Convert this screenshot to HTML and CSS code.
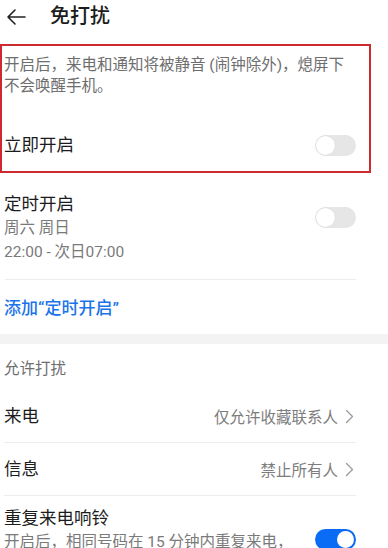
FILE: index.html
```html
<!DOCTYPE html>
<html lang="zh-CN">
<head>
<meta charset="utf-8">
<title>免打扰</title>
<link rel="stylesheet" href="styles.css">
</head>
<body>
<div class="page">
  <header class="header">
    <svg class="back" width="20" height="18" viewBox="0 0 20 18" aria-hidden="true">
      <path d="M19 9H2M9 2L2 9l7 7" fill="none" stroke="#222" stroke-width="1.6" stroke-linecap="round" stroke-linejoin="round"/>
    </svg>
    <h1 class="title">免打扰</h1>
  </header>

  <section class="highlight">
    <p class="desc">开启后，来电和通知将被静音 (闹钟除外)，熄屏下不会唤醒手机。</p>
    <div class="row row-now">
      <span class="label">立即开启</span>
      <span class="switch"></span>
    </div>
  </section>

  <section class="schedule">
    <div class="sched-row">
      <div class="sched-text">
        <div class="label">定时开启</div>
        <div class="sub">周六 周日</div>
        <div class="sub">22:00 - 次日07:00</div>
      </div>
      <span class="switch"></span>
    </div>
    <div class="divider"></div>
    <div class="add">添加“定时开启”</div>
  </section>

  <div class="band"></div>

  <section class="allow">
    <div class="group-title">允许打扰</div>
    <div class="row nav-row">
      <span class="label">来电</span>
      <span class="value">仅允许收藏联系人<svg class="chev" width="9" height="15" viewBox="0 0 9 15" aria-hidden="true"><path d="M1.5 1.5l6 6-6 6" fill="none" stroke="#9a9a9a" stroke-width="1.3" stroke-linecap="round" stroke-linejoin="round"/></svg></span>
    </div>
    <div class="divider"></div>
    <div class="row nav-row">
      <span class="label">信息</span>
      <span class="value">禁止所有人<svg class="chev" width="9" height="15" viewBox="0 0 9 15" aria-hidden="true"><path d="M1.5 1.5l6 6-6 6" fill="none" stroke="#9a9a9a" stroke-width="1.3" stroke-linecap="round" stroke-linejoin="round"/></svg></span>
    </div>
    <div class="divider"></div>
    <div class="repeat-row">
      <div class="repeat-text">
        <div class="label">重复来电响铃</div>
        <div class="sub sub-wide">开启后，相同号码在 15 分钟内重复来电，第二次来电将不被静音。</div>
      </div>
      <span class="switch on"></span>
    </div>
  </section>
</div>
</body>
</html>
```

FILE: styles.css
```css
html, body {
  margin: 0;
  padding: 0;
  background: #fff;
}
body {
  font-family: Roboto, "Noto Sans CJK SC", "Noto Sans", sans-serif;
  color: #1c1c1c;
  overflow: hidden;
  height: 548px;
}
.page {
  width: 388px;
}
.header {
  height: 32px;
  display: flex;
  align-items: center;
  padding-left: 6px;
  margin-bottom: 12px;
}
.back {
  display: block;
  margin-top: 2px;
}
.title {
  margin: 0 0 0 24px;
  font-size: 20px;
  font-weight: 500;
  line-height: 28px;
  color: #1c1c1c;
}
.highlight {
  border: 2px solid #cc2a2e;
  margin-right: 17px;
  padding: 9px 13px 0 2px;
  box-sizing: border-box;
  height: 129px;
}
.desc {
  margin: 0;
  font-size: 15.5px;
  line-height: 21px;
  color: #6e6e6e;
}
.row {
  display: flex;
  align-items: center;
  justify-content: space-between;
}
.row-now {
  height: 50px;
  margin-top: 23px;
}
.label {
  font-size: 17.5px;
  line-height: 24px;
  color: #1c1c1c;
}
.switch {
  position: relative;
  flex: none;
  width: 41px;
  height: 21px;
  border-radius: 11px;
  background: #e6e6e6;
}
.switch::after {
  content: "";
  position: absolute;
  left: 1px;
  top: 1px;
  width: 19px;
  height: 19px;
  border-radius: 50%;
  background: #fff;
  box-shadow: 0 0 0 0.5px #d8d8d8;
}
.switch.on {
  background: #0a6cf5;
}
.switch.on::after {
  left: auto;
  right: 2px;
  top: 2px;
  width: 17px;
  height: 17px;
  box-shadow: none;
}
.schedule {
  padding: 19px 32px 14px 4px;
}
.sched-row {
  display: flex;
  align-items: center;
  justify-content: space-between;
  padding-bottom: 15px;
}
.sub {
  font-size: 15.5px;
  line-height: 24px;
  color: #7a7a7a;
}
.sched-row .switch {
  margin-top: -22px;
}
.divider {
  height: 1px;
  background: #ececec;
}
.schedule .divider {
  margin-left: 1px;
}
.add {
  margin-top: 16px;
  font-size: 17px;
  line-height: 24px;
  font-weight: 500;
  color: #1a73e8;
}
.band {
  height: 10px;
  background: #f3f3f3;
}
.allow {
  padding: 0 32px 0 4px;
}
.group-title {
  height: 46px;
  display: flex;
  align-items: center;
  font-size: 15.5px;
  color: #6e6e6e;
}
.nav-row {
  height: 52px;
}
.value {
  display: flex;
  align-items: center;
  gap: 7px;
  font-size: 15.5px;
  color: #7d7d7d;
}
.chev {
  display: block;
  margin-right: 2px;
}
.repeat-row {
  display: flex;
  align-items: center;
  justify-content: space-between;
  padding-top: 10px;
}
.repeat-text {
  width: 290px;
}
.sub-wide {
  font-size: 15.5px;
}
.repeat-row .switch {
  margin-top: -5px;
}
```
